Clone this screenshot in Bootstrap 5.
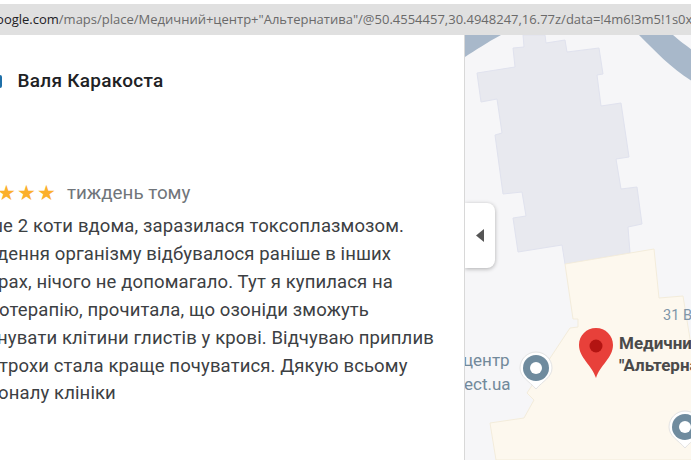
<!DOCTYPE html>
<html lang="uk"><head><meta charset="utf-8">
<link href="https://cdn.jsdelivr.net/npm/bootstrap@5.3.0/dist/css/bootstrap.min.css" rel="stylesheet">
<style>
html,body{height:460px;overflow:hidden;background:#fff}
.shot{height:460px;padding-top:4px}
.addr{height:31px;flex:none;background:#e0e0e0;color:#6a6a6a;font:13px/1 "Open Sans",sans-serif;padding-top:9px;white-space:nowrap;overflow:hidden}
.addr-in{margin-left:-11px}
.addr b{font-weight:400;color:#202124}
.main{height:425px;overflow:hidden}
.panel{width:464px;flex:none;overflow:hidden;font-family:Roboto,sans-serif;position:relative}
.who{font-size:19px;font-weight:500;color:#202124;line-height:24px;padding:34px 0 0 17.5px;letter-spacing:.27px}
.avatar-edge{width:2px;height:13px;background:#1e6fa8;border-radius:0 2px 2px 0;position:absolute;left:0;top:40px}
.when{margin-top:88px;height:24px;color:#70757a;font-size:18.8px;line-height:24px}
.stars{color:#fbb02c;font-size:21px;margin-left:-3px;margin-right:11px;display:flex;gap:1px}
.body-text{font-size:18.5px;line-height:27.9px;color:#3c4043;white-space:nowrap;margin-top:8px;letter-spacing:.12px}
.ln1{margin-left:-12px}.ln2{margin-left:-3px}.ln3{margin-left:-2px}.ln4{margin-left:-1px}.ln5{margin-left:-3px}.ln6{margin-left:-1px}.ln7{margin-left:-2px}
.mapbox{flex:1;position:relative;background:#f6f6f8;border-left:1px solid #d8d8d8;overflow:hidden}
.mapbox svg.geo{position:absolute;inset:0}
.toggle{position:absolute;left:0;top:168px;width:30px;height:65px;background:#fff;border-radius:0 8px 8px 0;box-shadow:0 1px 4px rgba(0,0,0,.3);display:flex;align-items:center;justify-content:center}
.lbl{position:absolute;white-space:nowrap;font-family:Roboto,sans-serif;line-height:20px}
.l-name{font-weight:700;color:#4a4a4a;font-size:17px;left:154px;top:298px}
.l-name2{font-weight:700;color:#4a4a4a;font-size:17px;left:154px;top:320px}
.l-31{color:#7f95a8;font-size:14.5px;left:198px;top:271px}
.l-c{color:#72899b;font-size:17px;left:-2px;top:315px}
.l-e{color:#72899b;font-size:17px;left:-1px;top:339px}
</style></head><body>
<div class="shot d-flex flex-column">
<div class="addr"><div class="addr-in"><b>google.com</b>/maps/place/Медичний+центр+"Альтернатива"/@50.4554457,30.4948247,16.77z/data=!4m6!3m5!1s0x</div></div>
<div class="main d-flex">
<div class="panel">
<div class="avatar-edge"></div>
<div class="who">Валя Каракоста</div>
<div class="when d-flex align-items-center"><span class="stars"><span>★</span><span>★</span><span>★</span></span><span>тиждень тому</span></div>
<div class="body-text">
<div class="ln1">ше 2 коти вдома, заразилася токсоплазмозом.</div>
<div class="ln2">дення організму відбувалося раніше в інших</div>
<div class="ln3">рах, нічого не допомагало. Тут я купилася на</div>
<div class="ln4">отерапію, прочитала, що озоніди зможуть</div>
<div class="ln5">нувати клітини глистів у крові. Відчуваю приплив</div>
<div class="ln6">трохи стала краще почуватися. Дякую всьому</div>
<div class="ln7">оналу клініки</div>
</div>
</div>
<div class="mapbox">
<svg class="geo" width="227" height="425" viewBox="464 35 227 425">
<path d="M464 35H500C485 43 475 50 464 57Z" fill="#a8b8ca"/>
<path d="M638 35H672C680 42 686 46 691 50V81C670 68 655 52 638 35Z" fill="#a8b8ca"/>
<path d="M522 35L523 47L512 48L514 67L476 73L480 102L496 99L501 133L494 135L502 194L521 192L525 216L512 218L517 252L561 245L564 264L629 253L627 227L641 224L636 187L620 189L615 159L628 157L620 103L600 106L596 75L602 74L598 48L566 52L564 40L545 43L544 35Z" fill="#e8e9ef" stroke="#e0e2ee"/>
<path d="M564 264L653 249L658 298L682 296L690 345L691 345V460H495L489 423L523 418L533 400L526 393L569 328L577 327L577 319L572 319Z" fill="#fdf8ee" stroke="#f3ecdb"/>
<g><path d="M535 352c-8.500 0-16 7-16 16 0 9 9 13 16 21 7-8 16-12 16-21 0-9-7.500-16-16-16Z" fill="#fff" stroke="#e3e3e3"/><circle cx="535" cy="368" r="13" fill="#6f8b9e"/><circle cx="535" cy="368" r="6" fill="#fff"/></g>
<g transform="translate(149 59)"><path d="M535 352c-8.500 0-16 7-16 16 0 9 9 13 16 21 7-8 16-12 16-21 0-9-7.500-16-16-16Z" fill="#fff" stroke="#e3e3e3"/><circle cx="535" cy="368" r="13" fill="#6f8b9e"/><circle cx="535" cy="368" r="6" fill="#fff"/></g>
<path d="M595 328c-9.500 0-17 7.500-17 17 0 13 13 20 17 33 4-13 17-20 17-33 0-9.500-7.500-17-17-17Z" fill="#e8403a"/>
<circle cx="595" cy="346" r="6.500" fill="#b31412"/>
</svg>
<div class="toggle"><svg width="8" height="13" viewBox="0 0 8 13"><path d="M8 0V13L0 6.500Z" fill="#555"/></svg></div>
<div class="lbl l-31">31 В</div>
<div class="lbl l-name">Медичний</div>
<div class="lbl l-name2">"Альтернатива"</div>
<div class="lbl l-c">центр</div>
<div class="lbl l-e">ect.ua</div>
</div>
</div>
</div>
<script src="https://cdn.jsdelivr.net/npm/bootstrap@5.3.0/dist/js/bootstrap.bundle.min.js"></script>
</body></html>
